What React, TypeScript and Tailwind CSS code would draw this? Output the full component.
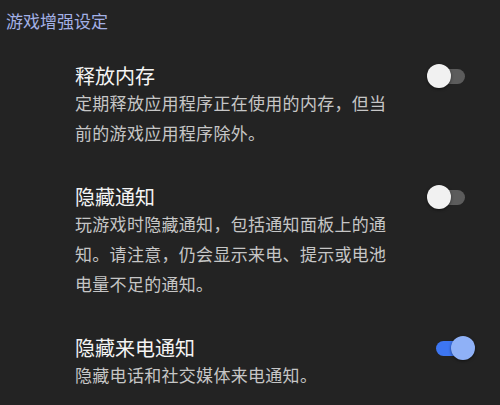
import React from 'react';

type Setting = {
  title: string;
  description: string;
  enabled: boolean;
};

const SETTINGS: Setting[] = [
  {
    title: '释放内存',
    description: '定期释放应用程序正在使用的内存，但当前的游戏应用程序除外。',
    enabled: false,
  },
  {
    title: '隐藏通知',
    description: '玩游戏时隐藏通知，包括通知面板上的通知。请注意，仍会显示来电、提示或电池电量不足的通知。',
    enabled: false,
  },
  {
    title: '隐藏来电通知',
    description: '隐藏电话和社交媒体来电通知。',
    enabled: true,
  },
];

function Toggle({ on }: { on: boolean }) {
  return (
    <div className="relative h-[24px] w-[48px] shrink-0">
      <div
        className={
          on
            ? 'absolute left-[9px] top-[5px] h-[15px] w-[32px] rounded-full bg-[#3d76f2]'
            : 'absolute left-[9px] top-[5px] h-[15px] w-[29px] rounded-full bg-[#5c5c5c]'
        }
      />
      <div
        className={
          on
            ? 'absolute left-[24px] top-0 h-[24px] w-[24px] rounded-full bg-[#8fb1f7] shadow-[0_1px_3px_rgba(0,0,0,0.5)]'
            : 'absolute left-0 top-0 h-[24px] w-[24px] rounded-full bg-[#f1f1f1] shadow-[0_1px_3px_rgba(0,0,0,0.5)]'
        }
      />
    </div>
  );
}

export default function App() {
  return (
    <div
      className="h-[405px] w-[500px] overflow-hidden bg-[#232323]"
      style={{ fontFamily: '"Noto Sans CJK SC", "Noto Sans", sans-serif' }}
    >
      {/* Section header */}
      <div className="pl-[6px] pt-[9px] text-[17px] leading-[24px] text-[#a3b1e6]">
        游戏增强设定
      </div>

      <div className="flex flex-col gap-[37px] pt-[31px]">
        {SETTINGS.map((s) => (
          <div key={s.title} className="flex items-start pl-[75px]">
            <div className="w-[316px]">
              <div className="text-[20px] leading-[24px] text-[#f4f4f4]">{s.title}</div>
              <p className="text-[17px] leading-[30px] tracking-[0.3px] text-[#c6c6c6]">
                {s.description}
              </p>
            </div>
            <div className="ml-[36px]">
              <Toggle on={s.enabled} />
            </div>
          </div>
        ))}
      </div>
    </div>
  );
}
